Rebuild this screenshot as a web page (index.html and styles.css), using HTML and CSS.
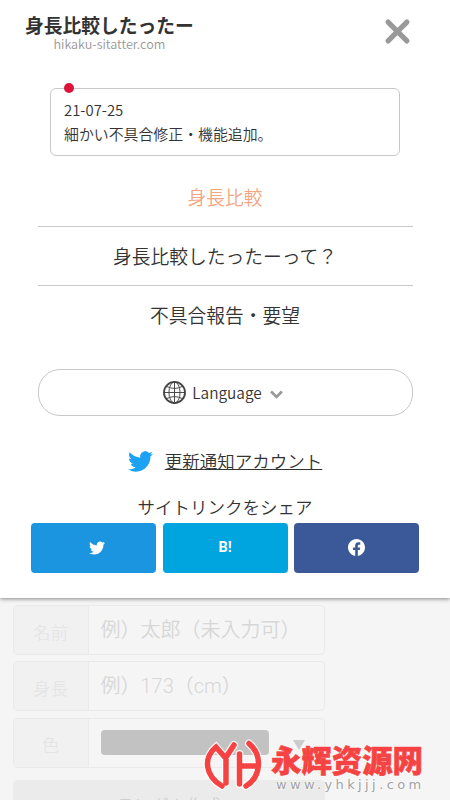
FILE: index.html
```html
<!DOCTYPE html>
<html lang="ja">
<head>
<meta charset="utf-8">
<title>身長比較したったー</title>
<link rel="stylesheet" href="styles.css">
</head>
<body>
<svg width="0" height="0" class="defs">
  <symbol id="bird" viewBox="0 0 512 512"><path d="M459.37 151.716c.325 4.548.325 9.097.325 13.645 0 138.72-105.583 298.558-298.558 298.558-59.452 0-114.68-17.219-161.137-47.106 8.447.974 16.568 1.299 25.34 1.299 49.055 0 94.213-16.568 130.274-44.832-46.132-.975-84.792-31.188-98.112-72.772 6.498.974 12.995 1.624 19.818 1.624 9.421 0 18.843-1.3 27.614-3.573-48.081-9.747-84.143-51.98-84.143-102.985v-1.299c13.969 7.797 30.214 12.67 47.431 13.319-28.264-18.843-46.781-51.005-46.781-87.391 0-19.492 5.197-37.36 14.294-52.954 51.655 63.675 129.3 105.258 216.365 109.807-1.624-7.797-2.599-15.918-2.599-24.04 0-57.828 46.782-104.934 104.934-104.934 30.213 0 57.502 12.67 76.67 33.137 23.715-4.548 46.456-13.32 66.599-25.34-7.798 24.366-24.366 44.833-46.132 57.827 21.117-2.273 41.584-8.122 60.426-16.243-14.292 20.791-32.161 39.308-52.628 54.253z"/></symbol>
  <symbol id="monogram" viewBox="0 0 60 54" overflow="visible"><path d="M19 48C2 38 0 20 13 9L22.500 20L31 7M23 18V45M36.500 16V46M36.500 28H54M46 5.500C60 17 58 39 43 48"/></symbol>
</svg>
<div class="menu">
  <header class="head">
    <div class="brand">
      <h1 class="title">身長比較したったー</h1>
      <div class="domain">hikaku-sitatter.com</div>
    </div>
    <svg class="close" viewBox="0 0 24 24"><path d="M3 3L21 21M21 3L3 21"/></svg>
  </header>
  <section class="notice">
    <span class="dot"></span>
    <p>21-07-25</p>
    <p>細かい不具合修正・機能追加。</p>
  </section>
  <nav class="nav">
    <a class="item current">身長比較</a>
    <a class="item">身長比較したったーって？</a>
    <a class="item">不具合報告・要望</a>
  </nav>
  <div class="language">
    <svg class="globe" viewBox="0 0 24 24"><circle cx="12" cy="12" r="11" stroke-width="1.9"/><path d="M12 1V23M1 12H23M3.5 5.5Q12 10 20.500 5.500M3.500 18.500Q12 14 20.500 18.500"/><ellipse cx="12" cy="12" rx="5.800" ry="11"/></svg>
    <span>Language</span>
    <svg class="chevron" viewBox="0 0 12 8"><path d="M1 1.300L6 6.200L11 1.300"/></svg>
  </div>
  <div class="account">
    <svg class="bird"><use href="#bird"/></svg>
    <a class="account-link">更新通知アカウント</a>
  </div>
  <div class="share-title">サイトリンクをシェア</div>
  <div class="share">
    <a class="btn twitter"><svg class="small-bird"><use href="#bird"/></svg></a>
    <a class="btn hatena">B!</a>
    <a class="btn facebook"><svg class="fb" viewBox="0 0 24 24"><path d="M24 12.073c0-6.627-5.373-12-12-12s-12 5.373-12 12c0 5.990 4.388 10.954 10.125 11.854v-8.385H7.078v-3.470h3.047V9.430c0-3.007 1.792-4.669 4.533-4.669 1.312 0 2.686.235 2.686.235v2.953H15.830c-1.491 0-1.956.925-1.956 1.874v2.250h3.328l-.532 3.470h-2.796v8.385C19.612 23.027 24 18.062 24 12.073z"/></svg></a>
  </div>
</div>
<main class="form">
  <div class="row"><div class="label">名前</div><div class="field">例）太郎（未入力可）</div></div>
  <div class="row"><div class="label">身長</div><div class="field">例）173（cm）</div></div>
  <div class="row"><div class="label">色</div><div class="field color"><span class="swatch"></span><span class="arrow"></span></div></div>
  <div class="random">ランダム作成</div>
</main>
<div class="watermark">
  <svg class="mark" viewBox="0 0 60 54"><use class="halo" href="#monogram"/><use class="ink" href="#monogram"/></svg>
  <div class="words"><div class="site">永辉资源网</div><div class="url">www.yhkjjj.com</div></div>
</div>
</body>
</html>
```

FILE: styles.css
```css
* { box-sizing: border-box; }
body {
  margin: 0;
  height: 800px;
  overflow: hidden;
  position: relative;
  background: #f5f5f5;
  color: #333;
  font-family: "Noto Sans CJK JP", sans-serif;
  font-weight: 350;
}
h1, p { margin: 0; }
.defs { position: absolute; }
.menu {
  position: relative;
  height: 597.5px;
  background: #fff;
  box-shadow: 0 1px 4px rgba(0, 0, 0, .45);
}
.head {
  display: flex;
  justify-content: space-between;
  height: 88px;
  padding: 12px 40px 0 25px;
}
.brand { text-align: center; }
.title { font-size: 18.75px; line-height: 26px; font-weight: 700; }
.domain { font-size: 12.600px; line-height: 12px; color: #999; }
.close { width: 25px; height: 25px; margin-top: 6.500px; stroke: #999; stroke-width: 5; stroke-linecap: round; overflow: visible; }
.notice {
  position: relative;
  width: 350px;
  height: 68px;
  margin: 0 auto;
  padding: 9px 13px;
  border: 1px solid #c8c8c8;
  border-radius: 6px;
  font-size: 14.900px;
  line-height: 24px;
}
.dot { position: absolute; left: 13px; top: -6px; width: 10px; height: 10px; border-radius: 50%; background: #dc143c; }
.nav { margin: 12px 37.5px 0; }
.item {
  display: block;
  height: 59px;
  line-height: 57px;
  text-align: center;
  font-size: 18.75px;
  border-bottom: 1px solid #c8c8c8;
}
.item:last-child { border: 0; }
.current { color: #f4a582; }
.language {
  display: flex;
  align-items: center;
  justify-content: center;
  height: 47px;
  margin: 24px 37.5px 0;
  border: 1px solid #c8c8c8;
  border-radius: 22px;
  font-size: 15.400px;
  line-height: 24px;
}
.language span { margin-top: -1px; }
.globe { width: 23px; height: 23px; margin-right: 6px; fill: none; stroke: #444; stroke-width: 1; }
.chevron { width: 13px; height: 9px; margin: 3px 4px 0 8px; fill: none; stroke: #999; stroke-width: 2.5; }
.account { display: flex; align-items: center; justify-content: center; height: 26px; margin-top: 32px; font-size: 17.5px; }
.bird { width: 25px; height: 25px; margin-right: 12px; fill: #1da1f2; }
.account-link { line-height: 24px; text-decoration: underline; text-decoration-thickness: 1px; }
.share-title { margin-top: 20px; text-align: center; font-size: 17.5px; line-height: 26px; height: 28.5px; }
.share { display: grid; grid-template-columns: repeat(3, 125px); gap: 6.250px; justify-content: center; }
.btn { display: flex; align-items: center; justify-content: center; height: 50px; border-radius: 4px; color: #fff; }
.twitter { background: #1b95e0; }
.hatena { background: #00a4de; font: 700 14.500px Roboto, sans-serif; }
.facebook { background: #3b5998; }
.small-bird { width: 16px; height: 16px; margin-left: 7px; fill: #fff; }
.fb { width: 17px; height: 17px; fill: #fff; }
.form { width: 312.5px; margin: 7.500px 0 0 12.5px; }
.row {
  display: grid;
  grid-template-columns: 75px 1fr;
  height: 50px;
  margin-bottom: 6.250px;
  border: 1px solid #eaeaea;
  border-radius: 4px;
}
.label { height: 48px; padding-top: 3px; border-right: 1px solid #eaeaea; background: #f1f1f1; color: #e5e5e5; font-size: 17.5px; line-height: 45px; text-align: center; }
.field { padding-left: 12px; color: #d7d7d7; font: 350 20px/49px Roboto, "Noto Sans CJK JP", sans-serif; white-space: nowrap; }
.color { display: flex; align-items: center; }
.swatch { width: 168px; height: 25px; border-radius: 4px; background: #c2c2c2; }
.arrow { margin: 4px 0 0 24px; border: 6px solid transparent; border-top: 10px solid #ccc; border-bottom: 0; }
.random { height: 50px; margin-top: 12px; border-radius: 5px; background: #ebebeb; color: #cecece; font-size: 17.5px; line-height: 50px; text-align: center; }
.watermark { position: absolute; left: 203px; top: 738px; display: flex; }
.mark { width: 60px; height: 54px; fill: none; stroke-linecap: round; overflow: visible; }
.halo { stroke: #fff; stroke-width: 8; opacity: .85; }
.ink { stroke: #f54343; stroke-width: 5.500; }
.words { margin: 3px 0 0 8px; white-space: nowrap; }
.site { font: 900 30.400px/36px "Noto Sans CJK SC", sans-serif; color: #f54343; -webkit-text-stroke: .6px #f54343; text-shadow: 0 0 2px #fff, 0 0 2px #fff; }
.url { margin-left: 5px; font: 13px/15px "DejaVu Sans", sans-serif; letter-spacing: 3.400px; color: #a2a2a2; text-shadow: 0 0 2px #fff, 0 0 2px #fff; }
```
